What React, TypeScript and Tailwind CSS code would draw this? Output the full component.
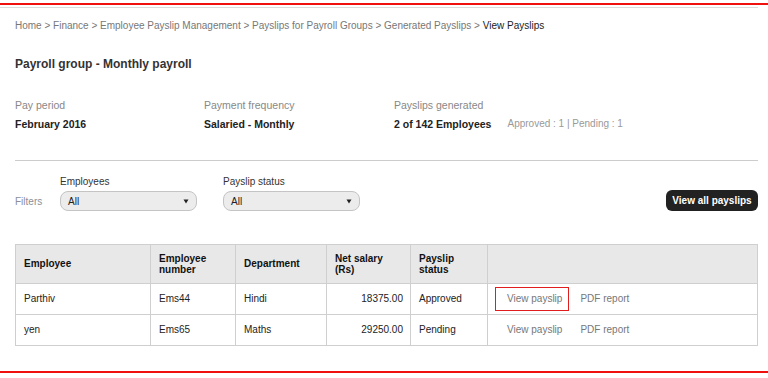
import React from "react";

const Arrow = () => (
  <svg width="6" height="5" viewBox="0 0 6 5" className="block">
    <path d="M0.5 0.5 L5.5 0.5 L3 4.5 Z" fill="#222" />
  </svg>
);

function Select({ label }: { label: string }) {
  return (
    <div className="flex flex-col">
      <div className="h-[12px] leading-[12px] text-[10px] text-[#333] mb-[3px]">{label}</div>
      <div className="w-[137px] h-[20px] rounded-[8px] border border-[#c4c4c4] bg-[#ececec] flex items-center pl-[7px] pr-[7px]">
        <span className="text-[10px] text-[#222] flex-1">All</span>
        <Arrow />
      </div>
    </div>
  );
}

export default function App() {
  const th = "border border-[#cfcfcf] text-left align-middle font-bold text-[10px] leading-[11px] text-[#111] px-[8px]";
  const td = "border border-[#cfcfcf] align-middle text-[10px] text-[#222] px-[8px]";
  return (
    <div className="w-[768px] h-[378px] bg-white overflow-hidden font-['Liberation_Sans',Arial,sans-serif] flex flex-col">
      <div className="h-[3px]" />
      <div className="h-[2px] bg-[#f01010]" />
      <div className="h-[2px]" />
      <div className="w-[758px] h-[1px] bg-[#dcdcdc]" />
      <div className="w-[758px] pl-[15px] pt-[1px] flex flex-col">
        <div className="h-[33px] flex items-center text-[10px] text-[#777] whitespace-pre">
          <span>Home &gt; Finance &gt; Employee Payslip Management &gt; Payslips for Payroll Groups &gt; Generated Payslips &gt; </span>
          <span className="text-[#222]">View Payslips</span>
        </div>
        <div className="h-[44px] flex items-center text-[12px] font-bold text-[#333]">Payroll group - Monthly payroll</div>
        <div className="grid grid-cols-[189px_190px_1fr] pt-[12px]">
          <div className="flex flex-col">
            <div className="h-[14px] leading-[14px] text-[10.5px] text-[#888]">Pay period</div>
            <div className="h-[14px] leading-[14px] mt-[4.5px] text-[10.5px] font-bold text-[#222]">February 2016</div>
          </div>
          <div className="flex flex-col">
            <div className="h-[14px] leading-[14px] text-[10.5px] text-[#888]">Payment frequency</div>
            <div className="h-[14px] leading-[14px] mt-[4.5px] text-[10.5px] font-bold text-[#222]">Salaried - Monthly</div>
          </div>
          <div className="flex flex-col">
            <div className="h-[14px] leading-[14px] text-[10.5px] text-[#888]">Payslips generated</div>
            <div className="h-[14px] leading-[14px] mt-[4.5px] flex items-center">
              <span className="text-[10.5px] font-bold text-[#222]">2 of 142 Employees</span>
              <span className="ml-[16px] text-[10px] text-[#999]">Approved : 1 | Pending : 1</span>
            </div>
          </div>
        </div>
        <div className="mt-[29.5px] h-[1px] bg-[#cccccc]" />
        <div className="mt-[15px] flex items-end">
          <div className="w-[45px] h-[20px] flex items-center text-[10px] text-[#8a8f98]">Filters</div>
          <Select label="Employees" />
          <div className="w-[26px]" />
          <Select label="Payslip status" />
          <div className="ml-auto mb-[0.5px] h-[21px] w-[92px] rounded-[6px] bg-[#222222] flex items-center justify-center text-[10px] font-bold text-white">
            View all payslips
          </div>
        </div>
        <table className="mt-[32.5px] w-[743px] border-collapse table-fixed">
          <colgroup>
            <col className="w-[135px]" />
            <col className="w-[85px]" />
            <col className="w-[91px]" />
            <col className="w-[84px]" />
            <col className="w-[77px]" />
            <col />
          </colgroup>
          <thead>
            <tr className="h-[39px] bg-[#e8e8e8]">
              <th className={th}>Employee</th>
              <th className={th}>Employee<br />number</th>
              <th className={th}>Department</th>
              <th className={th}>Net salary<br />(Rs)</th>
              <th className={th}>Payslip<br />status</th>
              <th className={th}></th>
            </tr>
          </thead>
          <tbody>
            <tr className="h-[31px]">
              <td className={td}>Parthiv</td>
              <td className={td}>Ems44</td>
              <td className={td}>Hindi</td>
              <td className={td + " text-right !pr-[7px]"}>18375.00</td>
              <td className={td}>Approved</td>
              <td className={td + " !px-[7px]"}>
                <div className="flex items-center">
                  <span className="h-[24px] flex items-center border border-[#e11d1d] pl-[11px] pr-[6px] text-[#777]">View payslip</span>
                  <span className="ml-[11px] text-[#777]">PDF report</span>
                </div>
              </td>
            </tr>
            <tr className="h-[31px]">
              <td className={td}>yen</td>
              <td className={td}>Ems65</td>
              <td className={td}>Maths</td>
              <td className={td + " text-right !pr-[7px]"}>29250.00</td>
              <td className={td}>Pending</td>
              <td className={td + " !px-[7px]"}>
                <div className="flex items-center">
                  <span className="h-[24px] flex items-center border border-transparent pl-[11px] pr-[6px] text-[#777]">View payslip</span>
                  <span className="ml-[11px] text-[#777]">PDF report</span>
                </div>
              </td>
            </tr>
          </tbody>
        </table>
      </div>
      <div className="mt-[25px] h-[2px] bg-[#f01010]" />
    </div>
  );
}
